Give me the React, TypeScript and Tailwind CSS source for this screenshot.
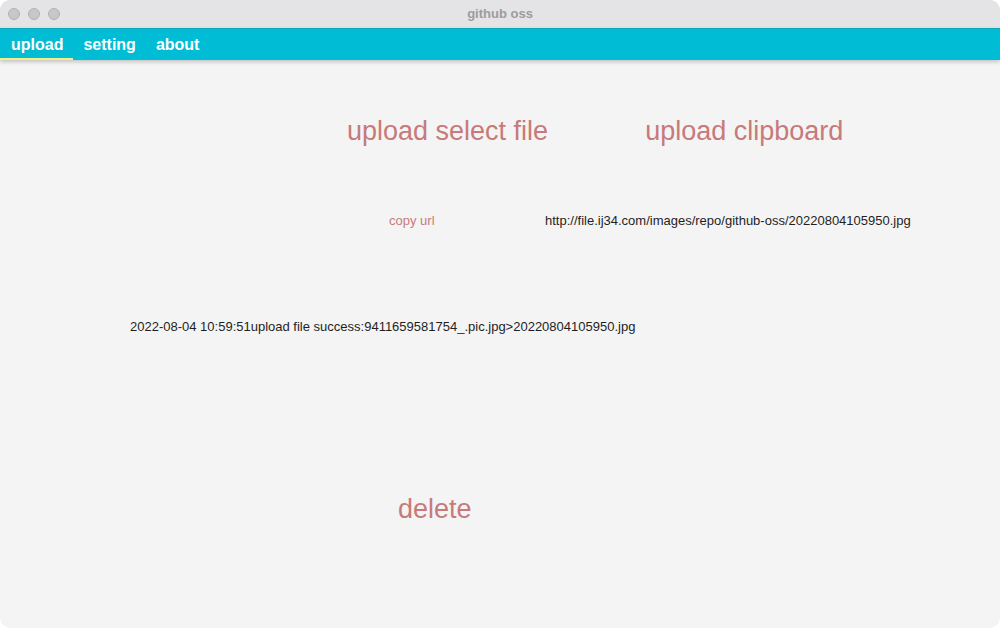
import React from "react";

export default function App() {
  const font = { fontFamily: '"Liberation Sans", Arial, sans-serif' };
  return (
    <div className="w-[1000px] h-[628px] bg-[#f4f4f4] flex flex-col overflow-hidden rounded-[10px]" style={font}>
      <div className="h-[28px] bg-[#e4e3e5] relative flex items-center shrink-0">
        <div className="flex gap-[8px] pl-[8px]">
          <span className="w-[12px] h-[12px] rounded-full bg-[#c7c7c7] border border-[#b3b3b3]" />
          <span className="w-[12px] h-[12px] rounded-full bg-[#c7c7c7] border border-[#b3b3b3]" />
          <span className="w-[12px] h-[12px] rounded-full bg-[#c7c7c7] border border-[#b3b3b3]" />
        </div>
        <div className="absolute inset-0 flex items-center justify-center text-[13px] font-bold text-[#9d9c9e]">
          github oss
        </div>
      </div>
      <div className="h-[32px] bg-[#00bcd4] flex shrink-0 shadow-[0_2px_4px_rgba(0,0,0,0.2)] relative z-10 border-t border-[#0aa7bb]">
        <div className="pl-[11px] pr-[10px] flex items-center text-white font-bold text-[16px] shadow-[inset_0_-2px_0_#f3f08a]">upload</div>
        <div className="px-[10px] flex items-center text-white font-bold text-[16px]">setting</div>
        <div className="px-[10px] flex items-center text-white font-bold text-[16px]">about</div>
      </div>
      <div className="flex flex-col flex-1">
        <div className="flex pl-[347px] gap-[97px] pt-[53px] text-[27px] text-[#c77a7a] leading-[36px]">
          <span>upload select file</span>
          <span>upload clipboard</span>
        </div>
        <div className="flex pl-[389px] pt-[64px] text-[13px] leading-[16px]">
          <span className="text-[#c77a7a] w-[156px]">copy url</span>
          <span className="text-[#1f1f1f]">http://file.ij34.com/images/repo/github-oss/20220804105950.jpg</span>
        </div>
        <div className="pl-[130px] pt-[90px] text-[13px] leading-[16px] text-[#1f1f1f]">
          2022-08-04 10:59:51upload file success:9411659581754_.pic.jpg&gt;20220804105950.jpg
        </div>
        <div className="pl-[398px] pt-[156px] text-[27px] leading-[36px] text-[#c77a7a]">delete</div>
      </div>
    </div>
  );
}
